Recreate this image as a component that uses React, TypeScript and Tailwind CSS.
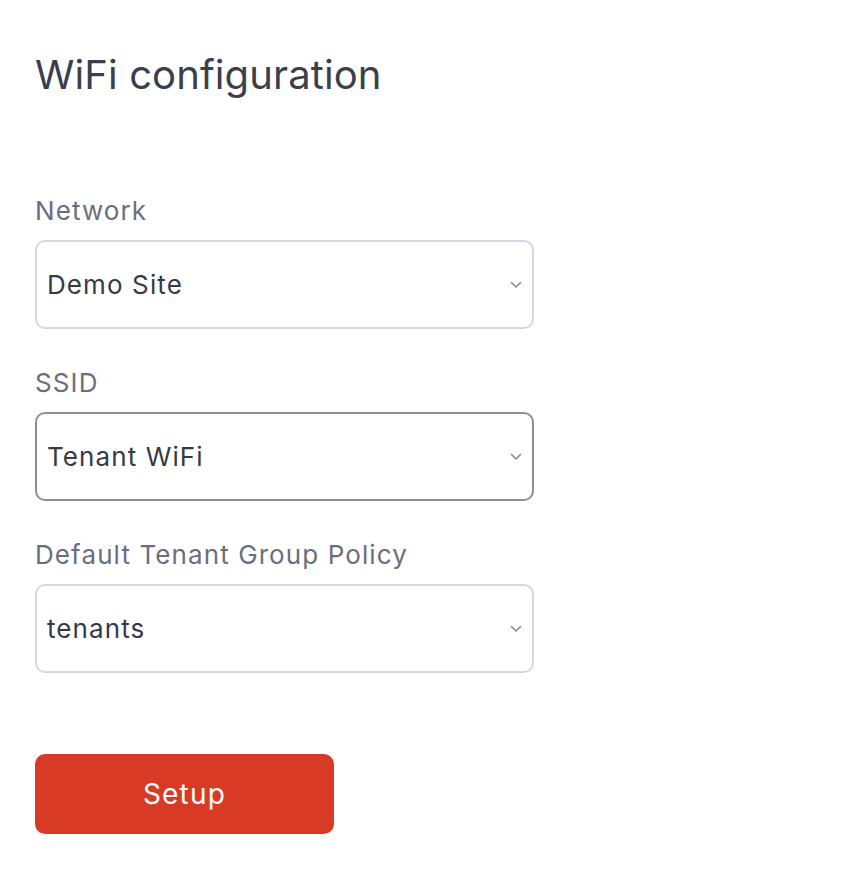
function Chevron() {
  return (
    <svg width="12" height="8" viewBox="0 0 12 8" fill="none" className="shrink-0">
      <path d="M1.5 1.5L6 6L10.5 1.5" stroke="#8a8a8e" strokeWidth="1.6" strokeLinecap="round" strokeLinejoin="round" />
    </svg>
  )
}

function SelectField({ label, value, focused }: { label: string; value: string; focused?: boolean }) {
  return (
    <div className="flex flex-col">
      <label className="text-[26px] leading-[32px] tracking-[1.1px] text-[#6b6e7c]">{label}</label>
      <div
        className={
          focused
            ? "mt-[13px] flex h-[89px] w-[499px] items-center justify-between rounded-[10px] border-2 border-[#8c8e9c] pl-[10px] pr-[10px]"
            : "mt-[13px] flex h-[89px] w-[499px] items-center justify-between rounded-[10px] border-2 border-[#d5d9df] pl-[10px] pr-[10px]"
        }
      >
        <span className="text-[26px] tracking-[1.1px] text-[#363a46]">{value}</span>
        <Chevron />
      </div>
    </div>
  )
}

export default function App() {
  return (
    <div className="min-h-screen bg-white pl-[35px] pt-[51px] font-['Inter',sans-serif]">
      <h1 className="text-[40px] leading-[48px] font-normal tracking-[0.1px] text-[#3b3f4c]">WiFi configuration</h1>

      <div className="mt-[96px] flex flex-col gap-[38px]">
        <SelectField label="Network" value="Demo Site" />
        <SelectField label="SSID" value="Tenant WiFi" focused />
        <SelectField label="Default Tenant Group Policy" value="tenants" />
      </div>

      <button className="mt-[81px] flex h-[80px] w-[299px] items-center justify-center rounded-[10px] bg-[#d93a26] text-[28px] tracking-[1.2px] text-white">
        Setup
      </button>
    </div>
  )
}
